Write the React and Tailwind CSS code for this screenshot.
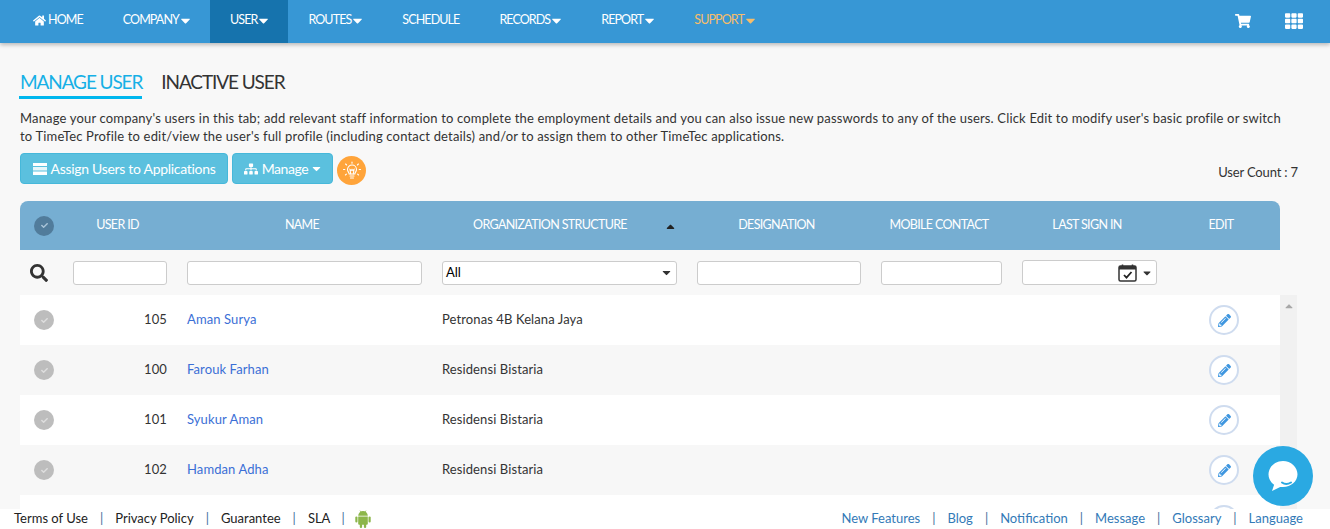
import React from 'react'
import {
  FaHome, FaCaretDown, FaCaretUp, FaShoppingCart, FaTh, FaSitemap, FaSearch,
  FaPencilAlt, FaCheck,
} from 'react-icons/fa'

const font = 'font-["Lato","Noto_Sans",sans-serif]'

const navItems = [
  { label: 'HOME', icon: true },
  { label: 'COMPANY', caret: true },
  { label: 'USER', caret: true, active: true },
  { label: 'ROUTES', caret: true },
  { label: 'SCHEDULE' },
  { label: 'RECORDS', caret: true },
  { label: 'REPORT', caret: true },
  { label: 'SUPPORT', caret: true, orange: true },
]

const users = [
  { id: '105', name: 'Aman Surya', org: 'Petronas 4B Kelana Jaya' },
  { id: '100', name: 'Farouk Farhan', org: 'Residensi Bistaria' },
  { id: '101', name: 'Syukur Aman', org: 'Residensi Bistaria' },
  { id: '102', name: 'Hamdan Adha', org: 'Residensi Bistaria' },
  { id: '', name: '', org: '' },
]

const gridCols = 'grid grid-cols-[43px_114px_255px_255px_184px_141px_155px_113px]'

function CheckDot({ dark }) {
  return (
    <div className={`w-5 h-5 rounded-full flex items-center justify-center ${dark ? 'bg-[#517c9b]' : 'bg-[#bdbdbd]'}`}>
      <FaCheck size={7} className={dark ? 'text-[#a9c4d8]' : 'text-[#dedede]'} />
    </div>
  )
}

function Bulb() {
  return (
    <svg width="20" height="20" viewBox="0 0 20 20" fill="none" stroke="#fff" strokeWidth="1.1" strokeLinecap="round">
      <path d="M7.200 13c0-1.600-1.700-2.300-1.700-4.500a4.500 4.500 0 0 1 9 0c0 2.200-1.700 2.900-1.700 4.500z" />
      <path d="M8 15h4M8.500 17h3M8.700 13 8 8.500l1.200 1 .8-1 .8 1 1.200-1-.7 4.500" />
      <path d="M10 1v1.200M3.600 3 4.600 4M16.400 3l-1 1M1.500 8.500h1.300M17.200 8.500h1.300M3.400 14l1-.9M16.600 14l-1-.9" />
    </svg>
  )
}

function BarsIcon() {
  return (
    <svg width="14" height="12" viewBox="0 0 14 12" fill="#fff">
      <rect x="0" y="0" width="14" height="3" />
      <rect x="0" y="4" width="14" height="3.500" opacity="0.85" />
      <rect x="0" y="8.500" width="14" height="3.500" />
    </svg>
  )
}

function CalendarIcon() {
  return (
    <svg width="19" height="18" viewBox="0 0 19 18">
      <rect x="1" y="2" width="17" height="15" rx="1.500" fill="#fff" stroke="#333" strokeWidth="1.500" />
      <rect x="1" y="2" width="17" height="3.500" fill="#333" />
      <path d="M4.500 0.500v3M14.500 0.500v3" stroke="#333" strokeWidth="1.500" />
      <path d="m6 11 2.500 2.700L13.500 8" fill="none" stroke="#222" strokeWidth="1.800" />
    </svg>
  )
}

function AndroidIcon() {
  return (
    <svg width="16" height="18" viewBox="0 0 16 18" fill="#8cb64a">
      <path d="M3.200 5.800a4.800 4.800 0 0 1 9.600 0z" />
      <path d="M5 .6l1 1.800M11 .6l-1 1.800" stroke="#8cb64a" strokeWidth=".7" />
      <path d="M3.200 6.500h9.600v7.300a1 1 0 0 1-1 1H4.200a1 1 0 0 1-1-1z" />
      <rect x="0.300" y="6.500" width="2.200" height="6" rx="1.100" />
      <rect x="13.500" y="6.500" width="2.200" height="6" rx="1.100" />
      <rect x="4.800" y="13" width="2.300" height="5" rx="1.100" />
      <rect x="8.900" y="13" width="2.300" height="5" rx="1.100" />
    </svg>
  )
}

function ChatBubble() {
  return (
    <svg width="30" height="32" viewBox="0 0 30 32">
      <path d="M15 1C7 1 .5 7 .5 14.300c0 4.300 2.200 8 5.600 10.400L4 31l8.200-4.100c.9.100 1.900.2 2.800.2 8 0 14.500-5.800 14.500-12.800S23 1 15 1z" fill="#fff" />
      <path d="M14 22.500c2.500 1.800 6 1.800 9 0" fill="none" stroke="#2aa9e2" strokeWidth="2" strokeLinecap="round" />
    </svg>
  )
}

function TopNav() {
  return (
    <nav className="h-[43px] shrink-0 bg-[#3797d5] shadow-[0_2px_4px_rgba(0,0,0,0.25)] flex items-stretch pl-[13px] pr-[27px] relative z-10">
      {navItems.map(item => (
        <div
          key={item.label}
          className={`flex items-center gap-[2px] px-5 pb-[3px] text-[12.5px] tracking-[-0.9px] ${item.active ? 'bg-[#1673ad]' : ''} ${item.orange ? 'text-[#f6bd6a]' : 'text-white'}`}
        >
          {item.icon && <FaHome size={13} />}
          <span>{item.label}</span>
          {item.caret && <FaCaretDown size={15} className="-mx-[3px]" />}
        </div>
      ))}
      <div className="ml-auto flex items-center gap-[34px] pb-[2px]">
        <FaShoppingCart size={16} className="text-white" />
        <FaTh size={18} className="text-white" />
      </div>
    </nav>
  )
}

function Toolbar() {
  return (
    <div className="flex items-center h-[31px] mt-[8px] relative">
      <button className="h-[31px] w-[208px] rounded bg-[#5bc0de] border border-[#46b8da] text-white text-[14px] tracking-[-0.3px] flex items-center justify-center gap-1">
        <BarsIcon />
        Assign Users to Applications
      </button>
      <button className="ml-1 h-[31px] w-[101px] rounded bg-[#5bc0de] border border-[#46b8da] text-white text-[14px] tracking-[-0.4px] flex items-center justify-center gap-1">
        <FaSitemap size={14} />
        Manage
        <FaCaretDown size={13} className="-mx-[2px]" />
      </button>
      <div className="ml-1 mt-1 w-[29px] h-[29px] rounded-full bg-[#ffa43a] flex items-center justify-center">
        <Bulb />
      </div>
      <div className="ml-auto mr-[12px] mt-[8px] text-[13px] tracking-[-0.15px] text-[#333]">User Count : 7</div>
    </div>
  )
}

function FilterRow() {
  const input = 'h-6 bg-white border border-[#ccc] rounded-[3px]'
  return (
    <div className={`${gridCols} h-[45px] items-center`}>
      <div className="pl-[10px] text-[#333]"><FaSearch size={18} /></div>
      <div className="px-[10px]"><div className={input} /></div>
      <div className="px-[10px]"><div className={input} /></div>
      <div className="px-[10px]">
        <div className={`${input} flex items-center justify-between pl-[3px] pr-[5px] text-[13px] text-black`}>
          All
          <FaCaretDown size={13} className="-mx-[2px] text-[#333]" />
        </div>
      </div>
      <div className="px-[10px]"><div className={input} /></div>
      <div className="px-[10px]"><div className={input} /></div>
      <div className="px-[10px]">
        <div className={`${input} h-[25px] flex items-center justify-end gap-[6px] pr-[5px]`}>
          <CalendarIcon />
          <FaCaretDown size={12} className="-mx-[2px] text-[#333]" />
        </div>
      </div>
      <div />
    </div>
  )
}

function UserRow({ user, striped }) {
  return (
    <div className={`${gridCols} h-[50px] items-center text-[13px] tracking-[0.1px] shrink-0 ${striped ? 'bg-[#f7f7f7]' : 'bg-white'}`}>
      <div className="pl-[14px]"><CheckDot /></div>
      <div className="text-right pr-[10px] text-[#333]">{user.id}</div>
      <div className="pl-[10px] text-[#3b6fd6]">{user.name}</div>
      <div className="pl-[10px] text-[#333]">{user.org}</div>
      <div />
      <div />
      <div />
      <div className="flex justify-center pl-[1px]">
        <div className="w-[30px] h-[30px] rounded-full bg-white border-2 border-[#cfdcef] flex items-center justify-center">
          <FaPencilAlt size={13} className="text-[#3f97e0]" />
        </div>
      </div>
    </div>
  )
}

function UserTable() {
  return (
    <div className="mt-[17px] w-[1260px]">
      <div className={`${gridCols} h-[49px] items-center rounded-t-lg bg-[#76aed2] text-white text-[12.5px] tracking-[-0.65px]`}>
        <div className="pl-[14px]"><CheckDot dark /></div>
        <div className="text-center pr-[5px]">USER ID</div>
        <div className="text-center pr-[5px]">NAME</div>
        <div className="relative text-center pr-[19px]">
          ORGANIZATION STRUCTURE
          <FaCaretUp size={13} className="absolute right-[10px] top-[4px] text-[#222]" />
        </div>
        <div className="text-center pr-[5px]">DESIGNATION</div>
        <div className="text-center pr-[5px]">MOBILE CONTACT</div>
        <div className="text-center pr-[5px]">LAST SIGN IN</div>
        <div className="text-center pr-[5px]">EDIT</div>
      </div>
      <FilterRow />
      <div className="flex w-[1277px]">
        <div className="w-[1260px]">
          {users.map((user, i) => <UserRow key={i} user={user} striped={i % 2 === 1} />)}
        </div>
        <div className="w-[17px] bg-[#f1f1f1] flex justify-center pt-[5px] text-[#a8a8a8]">
          <FaCaretUp size={12} />
        </div>
      </div>
    </div>
  )
}

function FooterLinks({ links }) {
  return links.map((link, i) => (
    <React.Fragment key={link}>
      {i > 0 && <span className="text-[#3f6f9c] mx-[12px]">|</span>}
      <span>{link}</span>
    </React.Fragment>
  ))
}

function Footer() {
  return (
    <footer className="absolute bottom-0 inset-x-0 h-5 bg-white flex items-center justify-between pl-[14px] pr-[27px] text-[13px]">
      <div className="flex items-center text-[#222]">
        <FooterLinks links={['Terms of Use', 'Privacy Policy', 'Guarantee', 'SLA']} />
        <span className="text-[#3f6f9c] ml-[11px] mr-[10px]">|</span>
        <AndroidIcon />
      </div>
      <div className="flex items-center text-[#337ab7]">
        <FooterLinks links={['New Features', 'Blog', 'Notification', 'Message', 'Glossary', 'Language']} />
      </div>
    </footer>
  )
}

export default function App() {
  return (
    <div className={`relative h-[529px] w-[1330px] overflow-hidden bg-[#f8f8f8] flex flex-col ${font}`}>
      <TopNav />
      <main className="px-5 pt-[26px]">
        <div className="flex gap-[19px] text-[19px] leading-[25px] tracking-[-1.1px] whitespace-nowrap h-[30px]">
          <div className="text-[#16b0e6] border-b-[3px] border-[#00b7ee] h-[30px] -ml-px pl-px">MANAGE USER</div>
          <div className="text-[#333]">INACTIVE USER</div>
        </div>
        <p className="mt-[10px] w-[1270px] text-[13px] leading-[18px] tracking-[0.17px] text-[#333]">
          Manage your company's users in this tab; add relevant staff information to complete the employment details and you can also issue new passwords to any of the users. Click Edit to modify user's basic profile or switch to TimeTec Profile to edit/view the user's full profile (including contact details) and/or to assign them to other TimeTec applications.
        </p>
        <Toolbar />
        <UserTable />
      </main>
      <Footer />
      <div className="absolute left-[1253px] top-[446px] w-[60px] h-[60px] rounded-full bg-[#2aa9e2] flex items-center justify-center">
        <ChatBubble />
      </div>
    </div>
  )
}
